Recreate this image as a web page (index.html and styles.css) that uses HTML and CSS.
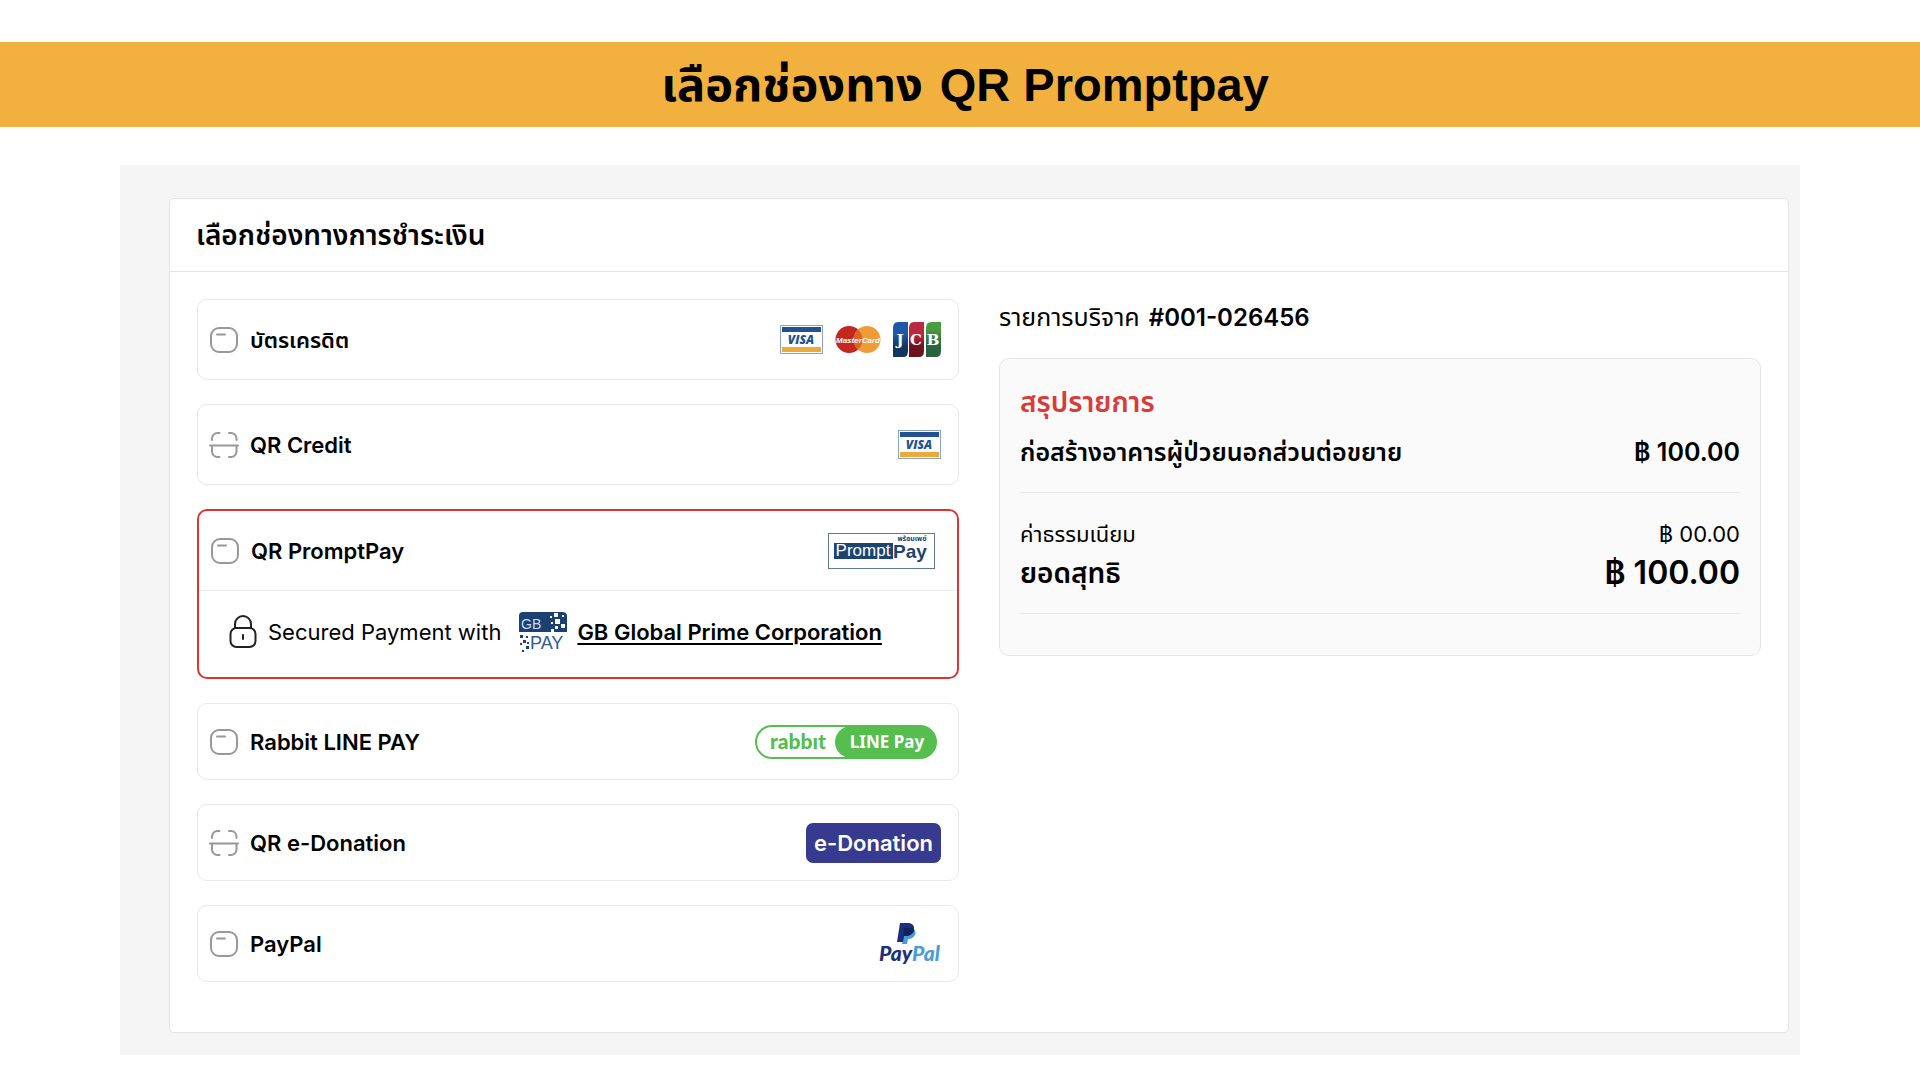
FILE: index.html
```
<!DOCTYPE html>
<html lang="th">
<head>
<meta charset="utf-8">
<meta name="viewport" content="width=device-width, initial-scale=1">
<title>เลือกช่องทาง QR Promptpay</title>
<link rel="stylesheet" href="styles.css">
</head>
<body>
<svg class="sprite" aria-hidden="true">
  <symbol id="icon-card" viewBox="0 0 30 30">
    <rect x="2" y="3" width="26" height="24" rx="8" fill="none" stroke="#98989b" stroke-width="2"/>
    <path d="M8 9.500h8" fill="none" stroke="#98989b" stroke-width="2" stroke-linecap="round"/>
  </symbol>
  <symbol id="icon-scan" viewBox="0 0 30 30">
    <path d="M3 10V8.500a5.500 5.500 0 0 1 5.500-5.500H10.500M20 3h2a5.500 5.500 0 0 1 5.500 5.500V10M3 16v5.500a5.500 5.500 0 0 0 5.500 5.500H10.500M20 27h2a5.500 5.500 0 0 0 5.500-5.500V16M1 15.500h28" fill="none" stroke="#98989b" stroke-width="2" stroke-linecap="round"/>
  </symbol>
</svg>

<header class="banner">
  <h1>เลือกช่องทาง <span class="latin">QR Promptpay</span></h1>
</header>

<main class="stage">
  <section class="card">
    <h2 class="card-title">เลือกช่องทางการชำระเงิน</h2>
    <div class="card-body">
      <form class="options">
        <label class="option tall">
          <span class="mark"><input type="radio" name="channel" value="card"><svg aria-hidden="true"><use href="#icon-card"/></svg></span>
          <span class="name">บัตรเครดิต</span>
          <span class="logos">
            <svg class="visa" viewBox="0 0 43 29" role="img" aria-label="Visa">
              <rect x=".5" y=".5" width="42" height="28" fill="#fff" stroke="#8ba3c4"/>
              <rect x="2" y="2" width="39" height="5" fill="#22528f"/>
              <rect x="2" y="22" width="39" height="5" fill="#eda83a"/>
              <text x="21" y="19" text-anchor="middle" class="visa-word">VISA</text>
            </svg>
            <svg class="mastercard" viewBox="0 0 46 29" role="img" aria-label="MasterCard">
              <circle cx="14" cy="14.500" r="13.500" fill="#c3281f"/>
              <circle cx="32" cy="14.500" r="13.500" fill="#f09c36"/>
              <path d="M23 4.400a13.500 13.500 0 0 1 0 20.200a13.500 13.500 0 0 1 0-20.200z" fill="#dc632b"/>
              <text x="23" y="18" text-anchor="middle" class="mc-word">MasterCard</text>
            </svg>
            <svg class="jcb" viewBox="0 0 48 35" role="img" aria-label="JCB">
              <defs>
                <linearGradient id="jb" x2="0" y2="1"><stop offset=".35" stop-color="#2058a8"/><stop offset=".7" stop-color="#12365f"/></linearGradient>
                <linearGradient id="jr" x2="0" y2="1"><stop offset=".35" stop-color="#bb2840"/><stop offset=".7" stop-color="#6b1420"/></linearGradient>
                <linearGradient id="jg" x2="0" y2="1"><stop offset=".2" stop-color="#4a9c40"/><stop offset=".7" stop-color="#28653f"/></linearGradient>
              </defs>
              <path d="M5 0H15V29Q15 35 10 35H0V6Q0 0 5 0z" fill="url(#jb)"/>
              <path d="M21 0H31V29Q31 35 26 35H16V6Q16 0 21 0z" fill="url(#jr)"/>
              <path d="M38 0H48V29Q48 35 43 35H33V6Q33 0 38 0z" fill="url(#jg)"/>
              <text x="7" y="23" text-anchor="middle" class="jcb-word">J</text>
              <text x="23" y="23" text-anchor="middle" class="jcb-word">C</text>
              <text x="40" y="23" text-anchor="middle" class="jcb-word">B</text>
            </svg>
          </span>
        </label>

        <label class="option tall">
          <span class="mark"><input type="radio" name="channel" value="qr-credit"><svg aria-hidden="true"><use href="#icon-scan"/></svg></span>
          <span class="name">QR Credit</span>
          <span class="logos">
            <svg class="visa" viewBox="0 0 43 29" role="img" aria-label="Visa">
              <rect x=".5" y=".5" width="42" height="28" fill="#fff" stroke="#8ba3c4"/>
              <rect x="2" y="2" width="39" height="5" fill="#22528f"/>
              <rect x="2" y="22" width="39" height="5" fill="#eda83a"/>
              <text x="21" y="19" text-anchor="middle" class="visa-word">VISA</text>
            </svg>
          </span>
        </label>

        <div class="selected">
          <label class="option plain">
            <span class="mark"><input type="radio" name="channel" value="promptpay" checked><svg aria-hidden="true"><use href="#icon-card"/></svg></span>
            <span class="name">QR PromptPay</span>
            <span class="logos">
              <svg class="promptpay" viewBox="0 0 112 36" role="img" aria-label="PromptPay">
                <rect x=".5" y=".5" width="106" height="35" fill="#fff" stroke="#5f7897"/>
                <rect x="6" y="10" width="59" height="16" fill="#1c4473"/>
                <text x="35" y="23" text-anchor="middle" class="pp-prompt">Prompt</text>
                <text x="65" y="25" class="pp-pay">Pay</text>
                <text x="84" y="8" text-anchor="middle" class="pp-thai">พร้อมเพย์</text>
              </svg>
            </span>
          </label>
          <div class="secured">
            <svg class="lock" viewBox="0 0 28 34" fill="none" stroke="#222" stroke-width="2" stroke-linecap="round" aria-hidden="true">
              <rect x="1.500" y="13" width="25" height="19" rx="6"/>
              <path d="M6 13V9a8 8 0 0 1 16 0v4M14 20v4"/>
            </svg>
            <span class="secured-text">Secured Payment with</span>
            <svg class="gbpay" viewBox="0 0 48 40" role="img" aria-label="GB Pay">
              <path d="M4 0H43Q48 0 48 4V20H0V4Q0 0 4 0z" fill="#1b4173"/>
              <text x="2" y="17" class="gb-word">GB</text>
              <path d="M35 1h4v4h-4zM43 3h2v2h-2zM31 4h2v2h-2zM36 7h5v5h-5zM32 10h2v2h-2zM42 12h4v4h-4zM36 14h3v3h-3zM32 17h3v3h-3z" fill="#fff"/>
              <path d="M1 23h3v3h-3zM7 24h2v2h-2zM4 28h3v3h-3zM8 30h2v2h-2zM1 31h2v2h-2zM7 34h3v3h-3zM3 38h2v2h-2z" fill="#1b4173"/>
              <text x="11" y="37" class="pay-word">PAY</text>
            </svg>
            <a href="#gb">GB Global Prime Corporation</a>
          </div>
        </div>

        <label class="option">
          <span class="mark"><input type="radio" name="channel" value="line-pay"><svg aria-hidden="true"><use href="#icon-card"/></svg></span>
          <span class="name">Rabbit LINE PAY</span>
          <span class="logos">
            <svg class="rabbit" viewBox="0 0 186 34" role="img" aria-label="Rabbit LINE Pay">
              <rect x="1" y="1" width="180" height="32" rx="16" fill="#fff" stroke="#55be4e" stroke-width="2"/>
              <path d="M96 1H165a16 16 0 0 1 0 32H96a16 16 0 0 1 0-32z" fill="#55be4e"/>
              <text x="43" y="24" text-anchor="middle" class="rabbit-word">rabbıt</text>
              <text x="132" y="23" text-anchor="middle" class="line-word">LINE Pay</text>
            </svg>
          </span>
        </label>

        <label class="option">
          <span class="mark"><input type="radio" name="channel" value="e-donation"><svg aria-hidden="true"><use href="#icon-scan"/></svg></span>
          <span class="name">QR e-Donation</span>
          <span class="logos"><span class="edonation">e-Donation</span></span>
        </label>

        <label class="option">
          <span class="mark"><input type="radio" name="channel" value="paypal"><svg aria-hidden="true"><use href="#icon-card"/></svg></span>
          <span class="name">PayPal</span>
          <span class="logos">
            <svg class="paypal" viewBox="0 0 62 42" role="img" aria-label="PayPal">
              <path d="M25 5H33Q38 7 36 12Q34 16 29 16L28 21H23z" fill="#4b9bd8"/>
              <path d="M21 0H30Q36 1 35 7Q34 12 28 13H25L24 19H18z" fill="#1c2f7c"/>
              <path d="M25 5H33Q35 6 35 7Q34 12 28 13H25L24 17z" fill="#12205c"/>
              <text x="0" y="38" class="paypal-word"><tspan fill="#1c2f7c">Pay</tspan><tspan fill="#4b9bd8">Pal</tspan></text>
            </svg>
          </span>
        </label>
      </form>

      <section class="order">
        <p class="order-number">รายการบริจาค <strong>#001-026456</strong></p>
        <div class="summary">
          <h3>สรุปรายการ</h3>
          <dl>
            <div class="line item"><dt>ก่อสร้างอาคารผู้ป่วยนอกส่วนต่อขยาย</dt><dd>฿ 100.00</dd></div>
            <div class="line fee"><dt>ค่าธรรมเนียม</dt><dd>฿ 00.00</dd></div>
            <div class="line total"><dt>ยอดสุทธิ</dt><dd>฿ 100.00</dd></div>
          </dl>
        </div>
      </section>
    </div>
  </section>
</main>
</body>
</html>
```
FILE: styles.css
```
* { box-sizing: border-box; }

body {
  margin: 0;
  padding: 42px 0 24px;
  background: #fff;
  color: #000;
  font-family: Inter, "Noto Sans Thai", "Noto Sans", sans-serif;
  font-size: 22px;
  line-height: 32px;
}

h1, h2, h3, p, dl, dt, dd { margin: 0; }

.sprite { position: absolute; width: 0; height: 0; }

.banner { padding-left: 10px; background: #f2b03f; text-align: center; }
.banner h1 { font-family: "Liberation Sans", "Noto Sans Thai", sans-serif; font-size: 47px; line-height: 85px; font-weight: 700; }
.latin { margin-left: 4px; }

.stage { margin: 38px 120px 0; padding: 33px 11px 22px 49px; background: #f5f5f5; }

.card { background: #fff; border: 1px solid #e5e5e5; border-radius: 5px; }
.card-title { padding: 20px 26px; border-bottom: 1px solid #e5e5e5; font-size: 28px; line-height: 32px; font-weight: 600; }
.card-body { display: grid; grid-template-columns: 1fr 1fr; gap: 40px; align-items: start; padding: 27px 27px 50px; }

.options { display: grid; gap: 24px; }
.option {
  display: flex;
  align-items: center;
  gap: 11px;
  min-height: 77px;
  padding: 0 17px 0 11px;
  border: 1px solid #e8e8e8;
  border-radius: 10px;
  cursor: pointer;
}
.option.tall { min-height: 81px; }
.option.plain { min-height: 80px; border: 0; border-radius: 0; border-bottom: 1px solid #ececec; }

.mark { display: grid; width: 30px; height: 30px; }
.mark input, .mark svg { grid-area: 1 / 1; width: 30px; height: 30px; margin: 0; }
.mark input { opacity: 0; cursor: pointer; }
.mark svg { pointer-events: none; }

.name { flex: 1; font-weight: 600; }
.logos { display: flex; align-items: center; gap: 12px; }

.selected { border: 2px solid #d93636; border-radius: 10px; }
.secured { display: flex; align-items: center; min-height: 86px; padding: 0 30px 4px; }
.secured-text { margin: 0 18px 0 11px; }
.secured a { margin-left: 10px; color: inherit; font-weight: 600; text-underline-offset: 3px; }

.lock { width: 28px; height: 34px; }
.gbpay { width: 48px; height: 40px; }
.visa { width: 43px; height: 29px; }
.mastercard { width: 46px; height: 29px; }
.jcb { width: 48px; height: 35px; }
.promptpay { width: 112px; height: 36px; }
.rabbit { width: 186px; height: 34px; }
.paypal { width: 62px; height: 42px; }
.edonation { padding: 4px 8px; border-radius: 7px; background: #363b8f; color: #fff; font-weight: 600; }

.visa-word { font: italic 800 12px "Open Sans", sans-serif; fill: #22528f; }
.mc-word { font: italic 700 8px "Liberation Sans", sans-serif; fill: #fff; }
.jcb-word { font: 700 15px "DejaVu Serif", serif; fill: #fff; }
.pp-prompt { font: 400 17px "Liberation Sans", sans-serif; fill: #fff; }
.pp-pay { font: 700 19px "Liberation Sans", sans-serif; fill: #1c4473; }
.pp-thai { font: 700 7px "Noto Sans Thai", sans-serif; fill: #1c4473; }
.gb-word { font: 400 14px "Liberation Sans", sans-serif; fill: #cfdcec; }
.pay-word { font: 400 18px "Liberation Sans", sans-serif; fill: #2f5a93; }
.rabbit-word { font: 900 21px Lato, sans-serif; fill: #55be4e; }
.line-word { font: 700 17px "Noto Sans", sans-serif; fill: #fff; }
.paypal-word { font: italic 900 21px Lato, sans-serif; }

.order-number { padding-top: 2px; font-size: 25px; }
.order-number strong { margin-left: 2px; font-size: 24px; font-weight: 600; }
.summary { margin-top: 24px; padding: 27px 20px 41px; border: 1px solid #e5e5e5; border-radius: 10px; background: #fafafa; }
.summary h3 { color: #d93b3b; font-size: 28px; line-height: 32px; font-weight: 600; }
.line { display: flex; justify-content: space-between; align-items: center; }
.item { padding: 18px 0 24px; border-bottom: 1px solid #e8e8e8; font-size: 25px; font-weight: 600; }
.fee { padding-top: 25px; }
.total { padding: 7px 0 24px; border-bottom: 1px solid #e8e8e8; font-size: 28px; font-weight: 600; }
.total dd { font-size: 32px; }
```
